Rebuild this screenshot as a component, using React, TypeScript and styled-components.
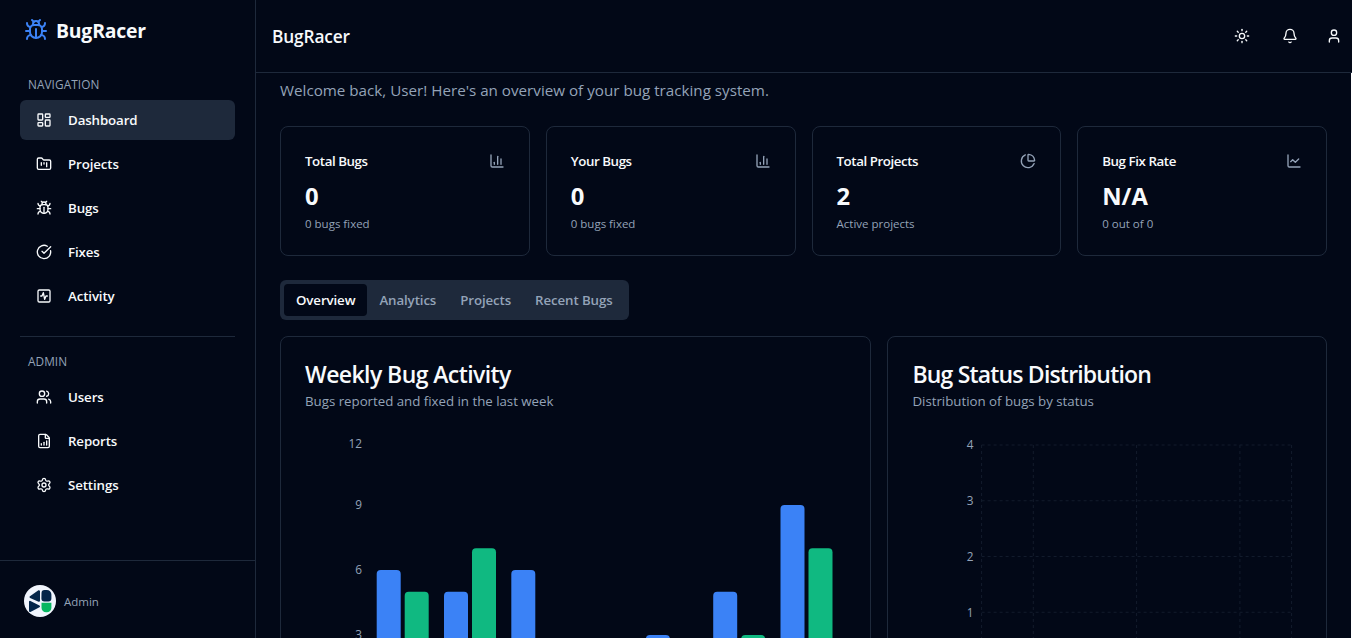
import React from "react";
import styled, { createGlobalStyle, css } from "styled-components";
import {
  Bell,
  Bug,
  ChartColumn,
  ChartLine,
  ChartPie,
  CircleCheckBig,
  FileChartColumnIncreasing,
  FolderKanban,
  LayoutDashboard,
  LucideIcon,
  Settings,
  SquareActivity,
  Sun,
  User,
  Users,
} from "lucide-react";

const color = {
  bg: "#020817",
  border: "#1e293b",
  text: "#f8fafc",
  muted: "#94a3b8",
  blue: "#3b82f6",
  green: "#10b981",
};

const GlobalStyle = createGlobalStyle`
  *, *::before, *::after { box-sizing: border-box; }
  body {
    margin: 0;
    overflow: hidden;
    background: ${color.bg};
    color: ${color.text};
    font-family: "Segoe UI", "Open Sans", "Noto Sans", sans-serif;
  }
  h1, h2, h3, p { margin: 0; }
`;

const Shell = styled.div`
  display: flex;
  height: 100vh;
  overflow: hidden;
`;

const Sidebar = styled.aside`
  display: flex;
  flex-direction: column;
  flex: none;
  width: 256px;
  border-right: 1px solid ${color.border};
`;

const Brand = styled.div`
  display: flex;
  align-items: center;
  gap: 8px;
  height: 60px;
  padding: 0 24px;
  font-size: 19.4px;
  line-height: 28px;
  font-weight: 700;
  letter-spacing: -0.2px;

  svg { color: ${color.blue}; }
  span { padding-top: 2px; }
`;

const Nav = styled.nav`
  display: flex;
  flex-direction: column;
  gap: 4px;
  flex: 1;
  padding: 16px 20px 0;
`;

const NavLabel = styled.div`
  height: 20px;
  padding: 0 8px;
  font-size: 11.8px;
  line-height: 16px;
  font-weight: 500;
  letter-spacing: 0.08px;
  color: ${color.muted};
`;

const NavItem = styled.a<{ $active?: boolean }>`
  display: flex;
  align-items: center;
  gap: 16px;
  height: 40px;
  padding: 0 16px;
  border-radius: 6px;
  font-size: 13.3px;
  font-weight: 600;
  letter-spacing: -0.12px;
  background: ${(p) => (p.$active ? color.border : "transparent")};
`;

const Divider = styled.hr`
  width: 100%;
  height: 1px;
  margin: 16px 0 12px;
  border: 0;
  background: ${color.border};
`;

const Account = styled.div`
  display: flex;
  align-items: center;
  gap: 8px;
  height: 78px;
  padding: 3px 24px 0;
  border-top: 1px solid ${color.border};
  font-size: 11.5px;
  color: ${color.muted};

  span { padding-top: 1px; }
`;

const Main = styled.div`
  display: flex;
  flex-direction: column;
  flex: 1;
  min-width: 0;
`;

const TopBar = styled.header`
  display: flex;
  align-items: center;
  justify-content: space-between;
  flex: none;
  height: 73px;
  padding: 0 2px 0 16px;
  border-bottom: 1px solid ${color.border};
`;

const PageTitle = styled.h1`
  padding-top: 2px;
  font-size: 17.3px;
  line-height: 28px;
  font-weight: 600;
  letter-spacing: -0.15px;
`;

const Actions = styled.div`
  display: flex;
  gap: 8px;
`;

const IconButton = styled.button<{ $width?: number }>`
  display: grid;
  place-items: center;
  width: ${(p) => p.$width ?? 40}px;
  height: 40px;
  padding: 0;
  border: 0;
  background: none;
  color: inherit;
`;

const Content = styled.main`
  flex: 1;
  min-height: 0;
  overflow: hidden;
  padding: 5px 24px 0;
  border-right: 1px solid #ffffff;
`;

const Welcome = styled.p`
  font-size: 15.2px;
  line-height: 24px;
  color: ${color.muted};
`;

const StatGrid = styled.section`
  display: grid;
  grid-template-columns: repeat(4, 1fr);
  gap: 16px;
  margin-top: 24px;
`;

const cardFrame = css`
  border: 1px solid ${color.border};
  border-radius: 8px;
  padding: 24px;
`;

const StatCard = styled.article`
  ${cardFrame}
  height: 130px;
`;

const StatHead = styled.div`
  display: flex;
  align-items: center;
  justify-content: space-between;
  height: 20px;
  margin-bottom: 9px;

  h3 {
    font-size: 13.3px;
    line-height: 20px;
    font-weight: 600;
    letter-spacing: -0.42px;
  }
  svg { color: ${color.muted}; }
`;

const StatValue = styled.div`
  font-size: 23.8px;
  line-height: 32px;
  font-weight: 700;
  margin-bottom: 4px;
`;

const StatNote = styled.p`
  font-size: 11.5px;
  line-height: 16px;
  color: ${color.muted};
`;

const TabList = styled.div`
  display: inline-flex;
  height: 40px;
  margin: 24px 0 16px;
  padding: 4px;
  border-radius: 6px;
  background: ${color.border};
  vertical-align: top;
`;

const Tab = styled.button<{ $active?: boolean }>`
  padding: 0 12px;
  border: 0;
  border-radius: 4px;
  font: 600 13.3px/20px "Segoe UI", "Open Sans", "Noto Sans", sans-serif;
  letter-spacing: -0.11px;
  background: ${(p) => (p.$active ? color.bg : "transparent")};
  color: ${(p) => (p.$active ? color.text : color.muted)};
`;

const ChartGrid = styled.section`
  display: grid;
  grid-template-columns: repeat(7, 1fr);
  gap: 16px;
`;

const ChartCard = styled.article<{ $span: number }>`
  ${cardFrame}
  grid-column: span ${(p) => p.$span};
  height: 450px;
  min-width: 0;
  padding-top: 23px;

  p {
    font-size: 13.3px;
    line-height: 16px;
    letter-spacing: -0.02px;
    color: ${color.muted};
  }
  svg {
    display: block;
    margin-top: 26px;
    overflow: visible;
  }
`;

const ChartTitle = styled.h2<{ $tracking: number }>`
  margin-bottom: 5px;
  font-size: 23px;
  line-height: 28px;
  font-weight: 600;
  letter-spacing: ${(p) => p.$tracking}px;
`;

const AxisText = styled.text`
  font-size: 11.8px;
  text-anchor: end;
  fill: ${color.muted};
`;

type NavEntry = { label: string; icon: LucideIcon };

const navigation: NavEntry[] = [
  { label: "Dashboard", icon: LayoutDashboard },
  { label: "Projects", icon: FolderKanban },
  { label: "Bugs", icon: Bug },
  { label: "Fixes", icon: CircleCheckBig },
  { label: "Activity", icon: SquareActivity },
];

const administration: NavEntry[] = [
  { label: "Users", icon: Users },
  { label: "Reports", icon: FileChartColumnIncreasing },
  { label: "Settings", icon: Settings },
];

const stats = [
  { title: "Total Bugs", value: "0", note: "0 bugs fixed", icon: ChartColumn },
  { title: "Your Bugs", value: "0", note: "0 bugs fixed", icon: ChartColumn },
  { title: "Total Projects", value: "2", note: "Active projects", icon: ChartPie },
  { title: "Bug Fix Rate", value: "N/A", note: "0 out of 0", icon: ChartLine },
];

const tabs = ["Overview", "Analytics", "Projects", "Recent Bugs"];

const week = [
  { reported: 6, fixed: 5 },
  { reported: 5, fixed: 7 },
  { reported: 6, fixed: 2 },
  { reported: 2, fixed: 1 },
  { reported: 3, fixed: 2 },
  { reported: 5, fixed: 3 },
  { reported: 9, fixed: 7 },
];

function Bar({ x, value, fill }: { x: number; value: number; fill: string }) {
  const top = 265 - value * 21.667;
  return (
    <path
      fill={fill}
      d={`M${x} 265V${top + 4}a4 4 0 0 1 4-4h16a4 4 0 0 1 4 4V265Z`}
    />
  );
}

function WeeklyChart() {
  return (
    <svg width="541" height="300">
      {[12, 9, 6, 3].map((v) => (
        <AxisText key={v} x={57} y={v === 12 ? 12.5 : 269 - v * 21.667}>
          {v}
        </AxisText>
      ))}
      {week.map((d, i) => (
        <g key={i}>
          <Bar x={71.7 + i * 67.3} value={d.reported} fill={color.blue} />
          <Bar x={99.7 + i * 67.3} value={d.fixed} fill={color.green} />
        </g>
      ))}
    </svg>
  );
}

function StatusChart() {
  const left = 69.6;
  const right = 379.6;
  const rows = [10, 65.75, 121.5, 177.25, 233];
  const columns = [left, 121.3, 224.6, 327.9, right];
  return (
    <svg width="389" height="300">
      <g stroke={color.border} strokeDasharray="3 3" opacity="0.6">
        {rows.map((y) => (
          <line key={y} x1={left} x2={right} y1={y} y2={y} />
        ))}
        {columns.map((x) => (
          <line key={x} x1={x} x2={x} y1={10} y2={233} />
        ))}
      </g>
      {[4, 3, 2, 1].map((v, i) => (
        <AxisText key={v} x={61.6} y={rows[i] + 4.3}>
          {v}
        </AxisText>
      ))}
    </svg>
  );
}

function Avatar() {
  return (
    <svg width="32" height="32" viewBox="0 0 32 32">
      <circle cx="16" cy="16" r="16" fill="#f1f5fd" />
      <g fill="#04264a" stroke="#04264a" strokeWidth="2" strokeLinejoin="round">
        <path d="M6.5 12L15 6.2V15.8Z" />
        <path d="M6 16.8V26L15 21.4Z" />
      </g>
      <path fill="#04264a" d="M17.5 8a3 3 0 0 1 3-3h2.3a4.6 4.6 0 0 1 4.6 4.6v4a3 3 0 0 1-3 3h-4a3 3 0 0 1-3-3Z" />
      <path fill="#08b761" d="M17.5 17.7h9.9v5a4.6 4.6 0 0 1-4.6 4.6h-.7a4.6 4.6 0 0 1-4.6-4.6Z" />
    </svg>
  );
}

function NavList({ items, active }: { items: NavEntry[]; active?: string }) {
  return (
    <>
      {items.map(({ label, icon: Icon }) => (
        <NavItem key={label} $active={label === active}>
          <Icon size={16} />
          {label}
        </NavItem>
      ))}
    </>
  );
}

export default function App() {
  return (
    <>
      <GlobalStyle />
      <Shell>
        <Sidebar>
          <Brand>
            <Bug size={24} />
            <span>BugRacer</span>
          </Brand>
          <Nav>
            <NavLabel>NAVIGATION</NavLabel>
            <NavList items={navigation} active="Dashboard" />
            <Divider />
            <NavLabel>ADMIN</NavLabel>
            <NavList items={administration} />
          </Nav>
          <Account>
            <Avatar />
            <span>Admin</span>
          </Account>
        </Sidebar>
        <Main>
          <TopBar>
            <PageTitle>BugRacer</PageTitle>
            <Actions>
              <IconButton><Sun size={16} /></IconButton>
              <IconButton><Bell size={16} /></IconButton>
              <IconButton $width={32}><User size={16} /></IconButton>
            </Actions>
          </TopBar>
          <Content>
            <Welcome>Welcome back, User! Here's an overview of your bug tracking system.</Welcome>
            <StatGrid>
              {stats.map(({ title, value, note, icon: Icon }) => (
                <StatCard key={title}>
                  <StatHead>
                    <h3>{title}</h3>
                    <Icon size={16} />
                  </StatHead>
                  <StatValue>{value}</StatValue>
                  <StatNote>{note}</StatNote>
                </StatCard>
              ))}
            </StatGrid>
            <TabList>
              {tabs.map((t) => (
                <Tab key={t} $active={t === "Overview"}>{t}</Tab>
              ))}
            </TabList>
            <ChartGrid>
              <ChartCard $span={4}>
                <ChartTitle $tracking={-0.58}>Weekly Bug Activity</ChartTitle>
                <p>Bugs reported and fixed in the last week</p>
                <WeeklyChart />
              </ChartCard>
              <ChartCard $span={3}>
                <ChartTitle $tracking={-0.82}>Bug Status Distribution</ChartTitle>
                <p>Distribution of bugs by status</p>
                <StatusChart />
              </ChartCard>
            </ChartGrid>
          </Content>
        </Main>
      </Shell>
    </>
  );
}
